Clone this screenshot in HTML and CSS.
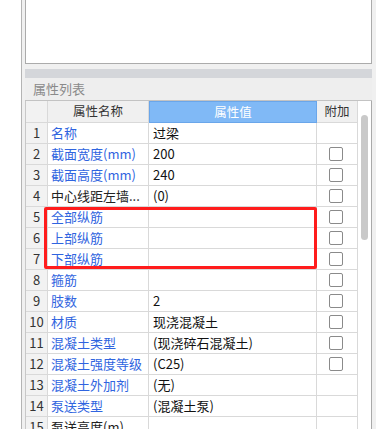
FILE: index.html
```html
<!doctype html>
<html>
<head>
<meta charset="utf-8">
<title>属性列表</title>
<link rel="stylesheet" href="styles.css">
</head>
<body>
<div class="side"></div>
<div class="panel">
	<div class="topbox"></div>
	<div class="bar"></div>
	<div class="listhead">属性列表</div>
	<div class="tablewrap">
		<div class="grid">
			<div class="c num"></div>
			<div class="c hd">属性名称</div>
			<div class="c hd on">属性值</div>
			<div class="c hd">附加</div>

			<div class="c num">1</div><div class="c name">名称</div><div class="c val">过梁</div><div class="c add"></div>
			<div class="c num">2</div><div class="c name">截面宽度(mm)</div><div class="c val">200</div><div class="c add"><span class="cb"></span></div>
			<div class="c num">3</div><div class="c name">截面高度(mm)</div><div class="c val">240</div><div class="c add"><span class="cb"></span></div>
			<div class="c num">4</div><div class="c name bk">中心线距左墙...</div><div class="c val">(0)</div><div class="c add"><span class="cb"></span></div>
			<div class="c num">5</div><div class="c name">全部纵筋</div><div class="c val"></div><div class="c add"><span class="cb"></span></div>
			<div class="c num">6</div><div class="c name">上部纵筋</div><div class="c val"></div><div class="c add"><span class="cb"></span></div>
			<div class="c num">7</div><div class="c name">下部纵筋</div><div class="c val"></div><div class="c add"><span class="cb"></span></div>
			<div class="c num">8</div><div class="c name">箍筋</div><div class="c val"></div><div class="c add"><span class="cb"></span></div>
			<div class="c num">9</div><div class="c name">肢数</div><div class="c val">2</div><div class="c add"><span class="cb"></span></div>
			<div class="c num">10</div><div class="c name">材质</div><div class="c val">现浇混凝土</div><div class="c add"><span class="cb"></span></div>
			<div class="c num">11</div><div class="c name">混凝土类型</div><div class="c val">(现浇碎石混凝土)</div><div class="c add"><span class="cb"></span></div>
			<div class="c num">12</div><div class="c name">混凝土强度等级</div><div class="c val">(C25)</div><div class="c add"><span class="cb"></span></div>
			<div class="c num">13</div><div class="c name">混凝土外加剂</div><div class="c val">(无)</div><div class="c add"></div>
			<div class="c num">14</div><div class="c name">泵送类型</div><div class="c val">(混凝土泵)</div><div class="c add"></div>
			<div class="c num">15</div><div class="c name bk">泵送高度(m)</div><div class="c val"></div><div class="c add"></div>
			<div class="mark"></div>
		</div>
		<div class="track"><div class="thumb"></div></div>
	</div>
</div>
</body>
</html>
```
FILE: styles.css
```css
*{margin:0;padding:0;box-sizing:border-box;}
html,body{width:100%;height:100%;overflow:hidden;background:#fff;}
body{display:flex;font-family:"Noto Sans CJK SC",sans-serif;font-size:13px;color:#222;}
.side{width:21px;flex:none;}
.panel{flex:none;width:355px;height:429px;background:#f0f0f0;border-left:1px solid #b4b4b4;padding-left:3px;display:flex;flex-direction:column;}
.topbox{width:347px;height:64px;flex:none;background:#fff;border:1px solid #ababab;border-top:none;}
.bar{width:347px;height:9px;flex:none;margin-top:5px;background:#d4d6da;}
.listhead{width:347px;height:23px;flex:none;background:#eeeeee;border-bottom:1px solid #c3c3c3;padding-left:8px;line-height:22px;color:#8a8a8a;}
.tablewrap{width:347px;flex:1;display:flex;border-right:1px solid #a9a9a9;background:#fff;overflow:hidden;}
.grid{position:relative;flex:none;display:grid;grid-template-columns:22px 101px 168px 41px;grid-auto-rows:21px;grid-template-rows:22px;border-left:1px solid #c8c8c8;align-self:flex-start;}
.c{border-right:1px solid #d9d9d9;border-bottom:1px solid #d9d9d9;line-height:20px;white-space:nowrap;overflow:hidden;}
.num{background:#f2f2f2;text-align:center;color:#333;}
.hd{background:#f0f0f0;text-align:center;color:#333;font-size:12.5px;}
.hd.on{background:#80b9f6;border:1px solid #6aa6ea;color:#fff;}
.name{padding-left:3px;color:#2f64e0;}
.name.bk{color:#222;}
.val{padding-left:4px;color:#111;}
.add{display:flex;align-items:center;justify-content:center;}
.cb{display:block;width:14px;height:14px;border:1px solid #8a8a8a;border-radius:2px;background:#fff;margin-left:-2px;}
.mark{position:absolute;left:18px;top:106px;width:273px;height:62px;border:3px solid #ff1c1c;border-radius:2px;}
.track{flex:1;}
.thumb{width:7px;height:125px;margin:14px 0 0 3px;border-radius:4px;background:#c9c9c9;}
```
